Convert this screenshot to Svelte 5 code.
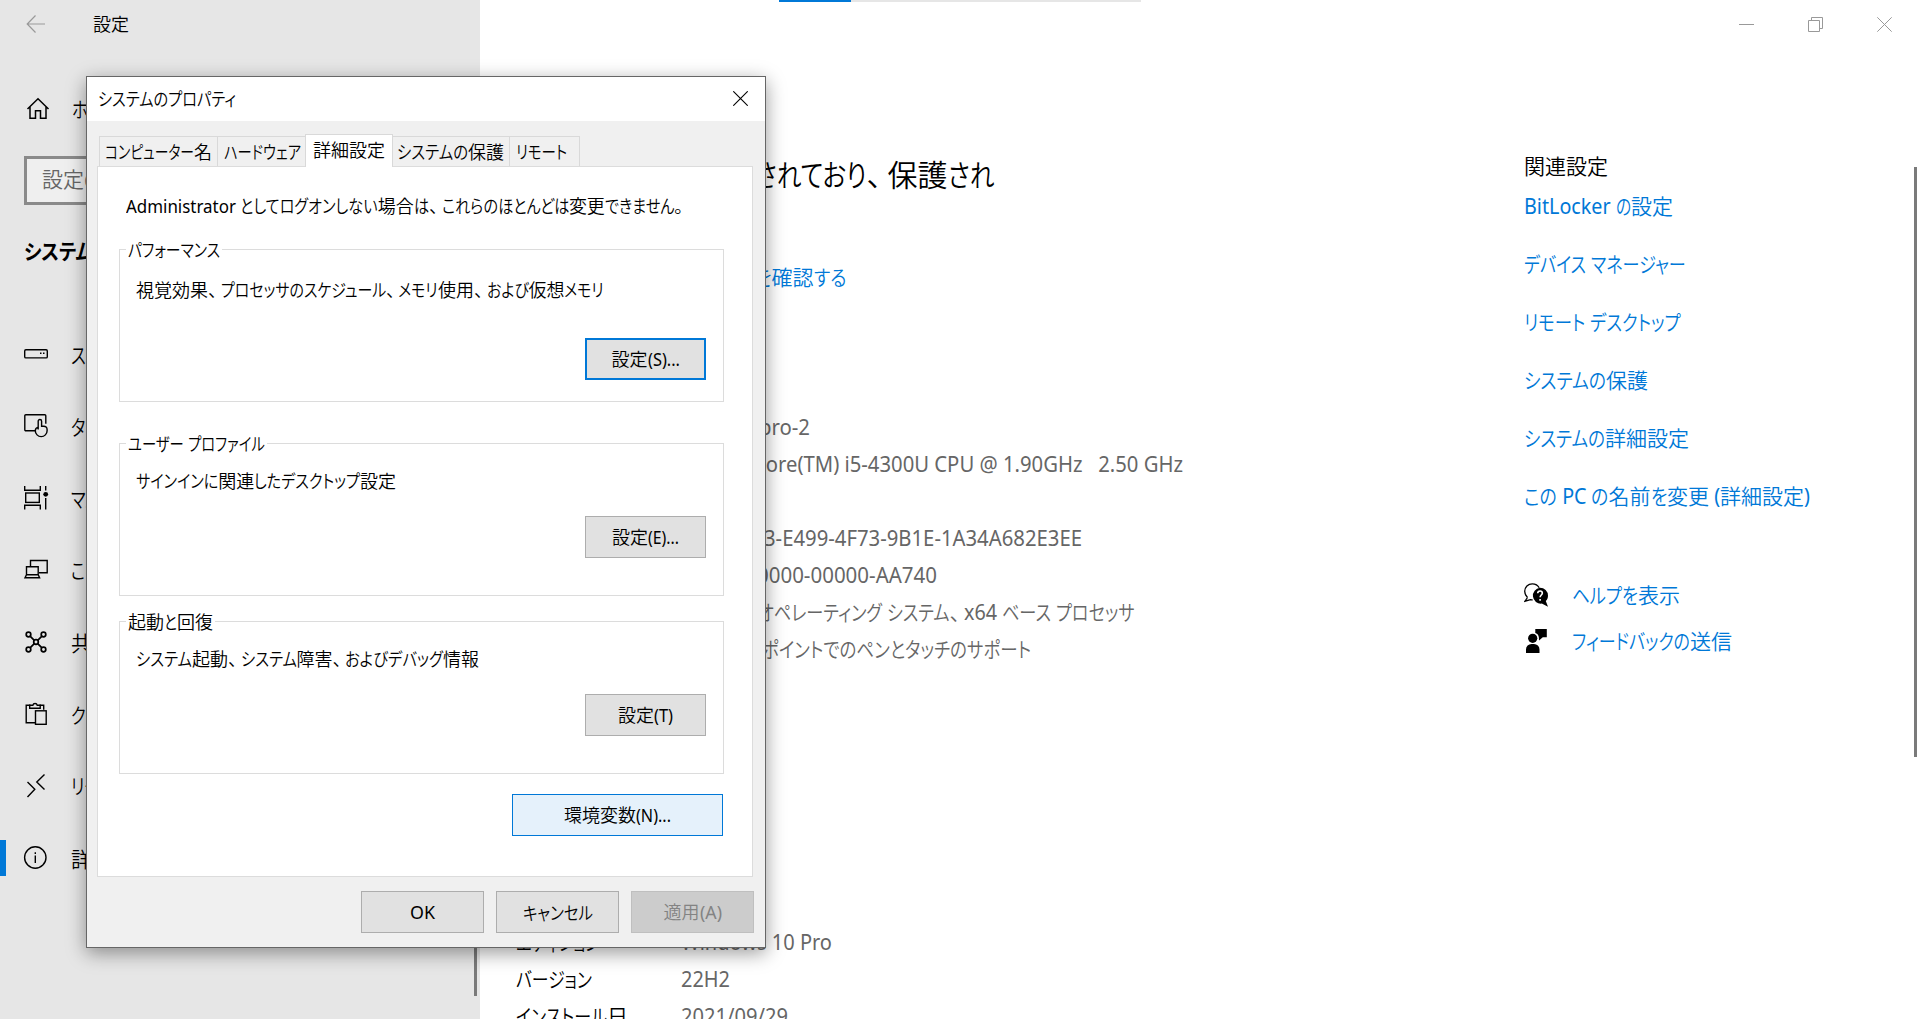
<script>
  const LATIN_SCALE = 0.94;
  const KANA_SCALE = 0.78;
  const PUNCT_SCALE = 0.7;

  // Splits a label into punctuation, kana, latin and kanji runs.
  function runs(text) {
    return (text.match(/[、。]|[\u3003-\u30ff]+|[\x20-\x7e]+|[^\u3000-\u30ff\x20-\x7e]+/g) ?? []).map((t) => ({
      t,
      kind: /^[、。]/.test(t) ? 'punct' : /^[\u3003-\u30ff]/.test(t) ? 'kana' : /^[\x20-\x7e]/.test(t) ? 'latin' : 'kanji'
    }));
  }

  // Condenses the kana (or the latin, when there is no kana) so the label takes the given width.
  function fit(node, width) {
    const parts = [...node.children].map((el) => ({
      el,
      kind: el.dataset.kind,
      w: el.getBoundingClientRect().width
    }));
    const sum = (k) => parts.filter((p) => p.kind === k).reduce((a, p) => a + p.w, 0);
    const kana = sum('kana');
    const latin = sum('latin');
    const solid = sum('kanji') + sum('punct') * PUNCT_SCALE;
    let ks = KANA_SCALE;
    let ls = LATIN_SCALE;
    if (width) {
      if (kana) ks = (width - solid - latin * ls) / kana;
      else if (latin) ls = (width - solid) / latin;
    }
    for (const p of parts) {
      if (p.kind === 'punct') {
        p.el.style.width = `${p.w * PUNCT_SCALE}px`;
        continue;
      }
      const s = p.kind === 'kana' ? ks : p.kind === 'latin' ? ls : 1;
      p.el.style.width = `${p.w * s}px`;
      p.el.style.transform = `scaleX(${s})`;
    }
  }

  const nav = [
    { icon: 'storage', text: 'ストレージ' },
    { icon: 'tablet', text: 'タブレット' },
    { icon: 'multitask', text: 'マルチタスク' },
    { icon: 'project', text: 'この PC へのプロジェクション' },
    { icon: 'shared', text: '共有エクスペリエンス' },
    { icon: 'clipboard', text: 'クリップボード' },
    { icon: 'remote', text: 'リモート デスクトップ' },
    { icon: 'about', text: '詳細情報', active: true }
  ];

  const specs = [
    { text: 'pro-2', x: 243, w: 51 },
    { text: 'Core(TM) i5-4300U CPU @ 1.90GHz   2.50 GHz', x: 237, w: 430 },
    { text: '', x: 0, w: 0 },
    { text: '3-E499-4F73-9B1E-1A34A682E3EE', x: 248, w: 318 },
    { text: '0000-00000-AA740', x: 241, w: 180 },
    { text: 'オペレーティング システム、x64 ベース プロセッサ', x: 242, w: 377 },
    { text: 'ポイントでのペンとタッチのサポート', x: 246, w: 269 }
  ];

  const edition = [
    { label: 'エディション', lw: 84, value: 'Windows 10 Pro', vw: 151 },
    { label: 'バージョン', lw: 76, value: '22H2', vw: 49 },
    { label: 'インストール日', lw: 112, value: '2021/09/29', vw: 107 }
  ];

  const links = [
    { text: 'BitLocker の設定', w: 149 },
    { text: 'デバイス マネージャー', w: 162 },
    { text: 'リモート デスクトップ', w: 157 },
    { text: 'システムの保護', w: 124 },
    { text: 'システムの詳細設定', w: 165 },
    { text: 'この PC の名前を変更 (詳細設定)', w: 286 }
  ];

  const tabs = [
    { text: 'コンピューター名', w: 107, cls: 't1' },
    { text: 'ハードウェア', w: 77, cls: 't2' },
    { text: '詳細設定', w: 0, cls: 't3', active: true },
    { text: 'システムの保護', w: 107, cls: 't4' },
    { text: 'リモート', w: 51, cls: 't5' }
  ];

  const groups = [
    { cls: 'g1', title: 'パフォーマンス', tw: 92, desc: '視覚効果、プロセッサのスケジュール、メモリ使用、および仮想メモリ', dw: 468, btn: '設定(S)...', bw: 68, focus: true },
    { cls: 'g2', title: 'ユーザー プロファイル', tw: 137, desc: 'サインインに関連したデスクトップ設定', dw: 260, btn: '設定(E)...', bw: 67 },
    { cls: 'g3', title: '起動と回復', tw: 85, desc: 'システム起動、システム障害、およびデバッグ情報', dw: 343, btn: '設定(T)', bw: 55 }
  ];
</script>

{#snippet label(text, w)}<span class="label" use:fit={w}>{#each runs(text) as r}<span class="run" data-kind={r.kind}>{r.t}</span>{/each}</span>{/snippet}

{#snippet navIcon(name)}
  <svg class="nav-icon" viewBox="0 0 26 26" fill="none" stroke="#000" stroke-width="1.4">
    {#if name === 'storage'}
      <rect x="1.7" y="8.7" width="22.6" height="8.2" rx="1.2" />
      <path d="M17 12.2h1.5M20 12.2h1.5" stroke-width="1.5" />
    {:else if name === 'tablet'}
      <path d="M12 17.7H2.8a1 1 0 0 1-1-1V2.8a1 1 0 0 1 1-1h19a1 1 0 0 1 1 1v8" />
      <path d="M15.2 16.5V8.2a1.7 1.7 0 0 1 3.4 0v5h2.2a3.2 3.2 0 0 1 3.3 3.2v1.3a5.9 5.9 0 0 1-11.8 0c0-1.8 1-3 2.9-3.6" />
    {:else if name === 'multitask'}
      <path d="M1.7 1v4.3h15.6V1M1.7 24.5v-4.3h15.6v4.3M22.7 1v4.5M22.7 13v11.5" />
      <rect x="2.7" y="8" width="13.6" height="9.4" />
      <circle cx="22.7" cy="9.3" r="2.4" fill="#000" stroke="none" />
    {:else if name === 'project'}
      <path d="M7.5 9.5v-6h16.7v12.2H16" />
      <path d="M3.5 17.8V9.7h11.7v8.1M3.5 17.8h11.7l1.4 3H2z" />
    {:else if name === 'shared'}
      <g stroke-width="1.7">
        <path d="M7.3 7.3l4 4M18.7 7.3l-4 4M7.3 18.7l4-4M18.7 18.7l-4-4" />
        <circle cx="5.5" cy="5.5" r="2.3" /><circle cx="20.5" cy="5.5" r="2.3" />
        <circle cx="5.5" cy="20.5" r="2.3" /><circle cx="20.5" cy="20.5" r="2.3" />
        <circle cx="13" cy="13" r="2.3" />
      </g>
    {:else if name === 'clipboard'}
      <path d="M12 21.8H3.2V4.2h4.3M16.5 4.2h4.2v4.5" />
      <path d="M6.7 7.2V4.2h3.2a2.2 2.2 0 0 1 4.3 0h3v3z" />
      <rect x="12.5" y="9.8" width="10.7" height="13.5" />
    {:else if name === 'remote'}
      <path d="M4.5 9l7.3 7.2L4.5 24M21.5 1.5L13.8 9l7.7 7.5" />
    {:else}
      <circle cx="12.3" cy="12.5" r="10.7" />
      <path d="M12.3 10.5v7.500M12.3 7.3v1.6" />
    {/if}
  </svg>
{/snippet}

<div class="screen">
  <aside class="sidebar">
    <header class="side-head">
      <svg class="back" viewBox="0 0 20 20" fill="none" stroke="#999" stroke-width="1.2"><path d="M19 10H1.5M9.5 1.5L1.2 10l8.3 8.5" /></svg>
      <span class="app-title">{@render label('設定', 0)}</span>
    </header>
    <div class="home">
      <svg class="home-icon" viewBox="0 0 24 24" fill="none" stroke="#000" stroke-width="1.5"><path d="M1.5 12L12 1.7 22.5 12M4 10v11.2h5.5v-7.5h5v7.5H20V10" /></svg>
      {@render label('ホーム', 0)}
    </div>
    <div class="search">{@render label('設定の検索', 0)}</div>
    <div class="section">{@render label('システム', 69)}</div>
    <nav>
      {#each nav as n}
        <div class="nav-item" class:active={n.active}>
          {@render navIcon(n.icon)}
          {@render label(n.text, 0)}
        </div>
      {/each}
    </nav>
    <div class="side-scroll"></div>
  </aside>

  <main class="content">
    <h1>{@render label('されており、保護され', 239)}</h1>
    <div class="check-link">{@render label('を確認する', 91)}</div>
    <div class="specs">
      {#each specs as s}
        <div class="spec" style:padding-left="{s.x}px">{@render label(s.text, s.w)}</div>
      {/each}
    </div>
    <div class="edition">
      {#each edition as e}
        <div class="ed-row"><span class="ed-label">{@render label(e.label, e.lw)}</span><span class="ed-value">{@render label(e.value, e.vw)}</span></div>
      {/each}
    </div>
  </main>

  <section class="related">
    <div class="rel-title">{@render label('関連設定', 0)}</div>
    <div class="links">
      {#each links as l}
        <div class="link">{@render label(l.text, l.w)}</div>
      {/each}
    </div>
    <div class="help">
      <svg class="help-icon" viewBox="0 0 24 24">
        <path d="M3.5 14.5C1.5 12.5.7 10.5.7 8.3.7 4.2 4 .8 8.3.8c3 0 5.6 1.5 6.9 4M3.5 14.5L1 18.2l5.5-1.5c.8.2 1.5.2 2.2.1" fill="none" stroke="#000" stroke-width="1.3" />
        <path d="M16 4.7a8 8 0 0 1 8 8c0 2-.8 4-2.2 5.4L24 23.7l-6.2-3.1a8 8 0 1 1-1.8-15.9z" />
        <path d="M13.7 10.3c.2-3.3 5-2.9 4.6 0-.2 1.7-2.2 1.8-2.2 4M16.1 16v1.7" fill="none" stroke="#fff" stroke-width="1.6" />
      </svg>
      <span class="help-text">{@render label('ヘルプを表示', 108)}</span>
    </div>
    <div class="help">
      <svg class="help-icon" viewBox="0 0 24 24">
        <circle cx="8.7" cy="9.3" r="4.6" />
        <path d="M2 24v-3.5a5.5 5.5 0 0 1 5.5-5.5h2.5a5.5 5.5 0 0 1 5.5 5.5V24zM11.3 0h11.5v8.3h-4L15 11.5c.2-4-.5-6.5-3.7-7.5z" />
      </svg>
      <span class="help-text">{@render label('フィードバックの送信', 160)}</span>
    </div>
  </section>

  <div class="progress"><i></i></div>
  <div class="win-controls">
    <svg viewBox="0 0 15 15"><path d="M0 7.5h15" /></svg>
    <svg viewBox="0 0 15 15"><path d="M.5 3.5h11v11H.5zM3.5 3.5v-3h11v11h-3" /></svg>
    <svg viewBox="0 0 15 15"><path d="M.3.3l14.4 14.4M14.7.3L.3 14.7" /></svg>
  </div>
  <div class="main-scroll"></div>

  <div class="dialog">
    <div class="titlebar">
      {@render label('システムのプロパティ', 138)}
      <svg class="close" viewBox="0 0 15 15"><path d="M.3.3l14.4 14.4M14.7.3L.3 14.7" /></svg>
    </div>
    <div class="tabs">
      {#each tabs as t}
        <div class="tab {t.cls}" class:active={t.active}>{@render label(t.text, t.w)}</div>
      {/each}
    </div>
    <div class="page">
      <p class="intro">{@render label('Administrator としてログオンしない場合は、これらのほとんどは変更できません。', 561)}</p>
      {#each groups as g}
        <div class="group {g.cls}">
          <div class="legend">{@render label(g.title, g.tw)}</div>
          <div class="desc">{@render label(g.desc, g.dw)}</div>
          <div class="btn" class:focus={g.focus}>{@render label(g.btn, g.bw)}</div>
        </div>
      {/each}
      <div class="btn env">{@render label('環境変数(N)...', 107)}</div>
    </div>
    <div class="actions">
      <div class="btn">{@render label('OK', 25)}</div>
      <div class="btn">{@render label('キャンセル', 70)}</div>
      <div class="btn disabled">{@render label('適用(A)', 58)}</div>
    </div>
  </div>
</div>

<style>
  :global(body) { margin: 0; overflow: hidden; }
  .screen, .screen * { box-sizing: border-box; }
  .screen {
    position: relative;
    display: flex;
    width: 1920px;
    height: 1019px;
    overflow: hidden;
    background: #fff;
    color: #000;
    font: 350 21px/26px 'Noto Sans', 'Noto Sans CJK JP', sans-serif;
  }
  .label { display: inline-flex; white-space: pre; flex: none; }
  .run { display: inline-block; margin-top: -1px; white-space: pre; transform-origin: 0 50%; flex: none; font-family: 'Noto Sans CJK JP', sans-serif; }
  .run[data-kind='kana'] { font-feature-settings: 'palt'; }
  .run[data-kind='latin'] { margin-top: 0; font-family: 'Noto Sans', sans-serif; font-weight: 400; }

  .sidebar { position: relative; width: 480px; height: 100%; background: #e6e6e6; flex: none; }
  .side-head { display: flex; align-items: center; height: 48px; padding-left: 26px; font-size: 18px; }
  .back { width: 20px; height: 20px; margin-right: 47px; }
  .home { display: flex; align-items: center; height: 40px; margin-top: 41px; padding: 0 0 2px 26px; }
  .home-icon { width: 24px; height: 24px; margin: 2px 22px 0 0; }
  .search {
    display: flex; align-items: center; height: 49px; margin: 27px 24px 0 24px; padding: 0 0 4px 15px;
    border: 3px solid #8a8a8a; background: #efefef; color: #666;
  }
  .section { height: 40px; margin-top: 25px; padding: 8px 0 0 24px; font-weight: 700; }
  nav { margin-top: 48px; }
  .nav-item { display: flex; align-items: center; height: 72px; padding-left: 23px; }
  .nav-item.active { background: linear-gradient(#0078d7, #0078d7) 0 18px / 6px 36px no-repeat; }
  .nav-icon { width: 26px; height: 26px; margin-right: 22px; }
  .side-scroll { position: absolute; left: 474px; bottom: 23px; width: 3px; height: 500px; background: #7a7a7a; }

  .content { width: 1044px; flex: none; padding: 151px 0 0 36px; }
  h1 { margin: 0; padding-left: 239px; font-size: 30px; line-height: 46px; font-weight: inherit; height: 46px; }
  .check-link { height: 36px; padding: 5px 0 0 239px; margin-top: 62px; color: #0078d7; }
  .specs { margin-top: 114px; color: #666; }
  .spec { height: 37px; padding-top: 5px; }
  .edition { margin-top: 256px; }
  .ed-row { display: flex; height: 37px; padding-top: 5px; }
  .ed-label { width: 165px; }
  .ed-value { color: #666; }

  .related { width: 396px; flex: none; padding-top: 153px; }
  .rel-title { height: 26px; }
  .links { color: #0078d7; margin-top: 14px; }
  .link { height: 58px; }
  .help { display: flex; align-items: center; height: 46px; color: #0078d7; }
  .links + .help { margin-top: 31px; }
  .help-icon { width: 24px; height: 24px; margin-right: 24px; fill: #000; }
  .help-text { display: flex; padding-bottom: 2px; }

  .progress { position: absolute; left: 779px; top: 0; width: 362px; height: 2px; background: #e6e6e6; }
  .progress i { display: block; width: 72px; height: 2px; background: #0078d7; }
  .win-controls { position: absolute; right: 28px; top: 17px; display: flex; gap: 54px; }
  .win-controls svg { width: 15px; height: 15px; fill: none; stroke: #999; }
  .main-scroll { position: absolute; left: 1914px; top: 167px; width: 3px; height: 590px; background: #7a7a7a; }

  .dialog {
    position: absolute; left: 86px; top: 76px; width: 680px; height: 872px;
    border: 1px solid #666; background: #f0f0f0; font-size: 18px;
    box-shadow: 0 5px 18px rgba(0, 0, 0, 0.4);
  }
  .titlebar { display: flex; align-items: center; justify-content: space-between; height: 44px; padding: 0 17px 2px 11px; background: #fff; }
  .close { width: 15px; height: 15px; fill: none; stroke: #000; stroke-width: 1.1; margin-top: 1px; }
  .tabs { display: flex; align-items: flex-end; height: 45px; padding-left: 12px; }
  .tab {
    display: flex; align-items: center; height: 30px; border: 1px solid #d9d9d9;
    border-width: 1px 1px 0 0;
  }
  .t1 { width: 119px; border-left-width: 1px; padding-left: 5px; }
  .t2 { width: 87px; padding-left: 6px; border-right: 0; }
  .t3 { width: 88px; padding-left: 7px; }
  .t4 { width: 117px; padding-left: 4px; }
  .t5 { width: 70px; padding-left: 6px; }
  .tab.active { position: relative; height: 33px; margin-bottom: -1px; background: #fff; border-left-width: 1px; padding: 0 0 4px 7px; }
  .page { display: flex; flex-direction: column; width: 656px; height: 711px; margin-left: 10px; padding: 26px 29px 0 21px; border: 1px solid #dcdcdc; background: #fff; }
  .intro { margin: 0; padding-left: 7px; height: 56px; }
  .group { display: flex; flex-direction: column; width: 605px; height: 153px; border: 1px solid #dcdcdc; flex: none; }
  .g2 { margin-top: 41px; }
  .g3 { margin-top: 25px; }
  .legend { align-self: flex-start; margin: -13px 0 0 6px; padding: 0 2px; height: 26px; background: #fff; }
  .desc { padding-left: 16px; margin-top: 11px; height: 26px; }
  .g1 .desc { margin-top: 14px; }
  .btn {
    display: flex; align-items: center; justify-content: center; width: 121px; height: 42px;
    border: 1px solid #adadad; background: #e1e1e1;
  }
  .group .btn { align-self: flex-end; margin: auto 17px 37px 0; }
  .group.g1 .btn { margin-bottom: 21px; }
  .btn.focus { border: 2px solid #0078d7; }
  .btn.env { width: 211px; align-self: flex-end; margin-top: 20px; border-color: #0078d7; background: #e5f1fb; }
  .actions { display: flex; justify-content: flex-end; gap: 12px; padding: 14px 11px 0 0; }
  .actions .btn { width: 123px; }
  .btn.disabled { background: #ccc; border-color: #bfbfbf; color: #838383; }
</style>
